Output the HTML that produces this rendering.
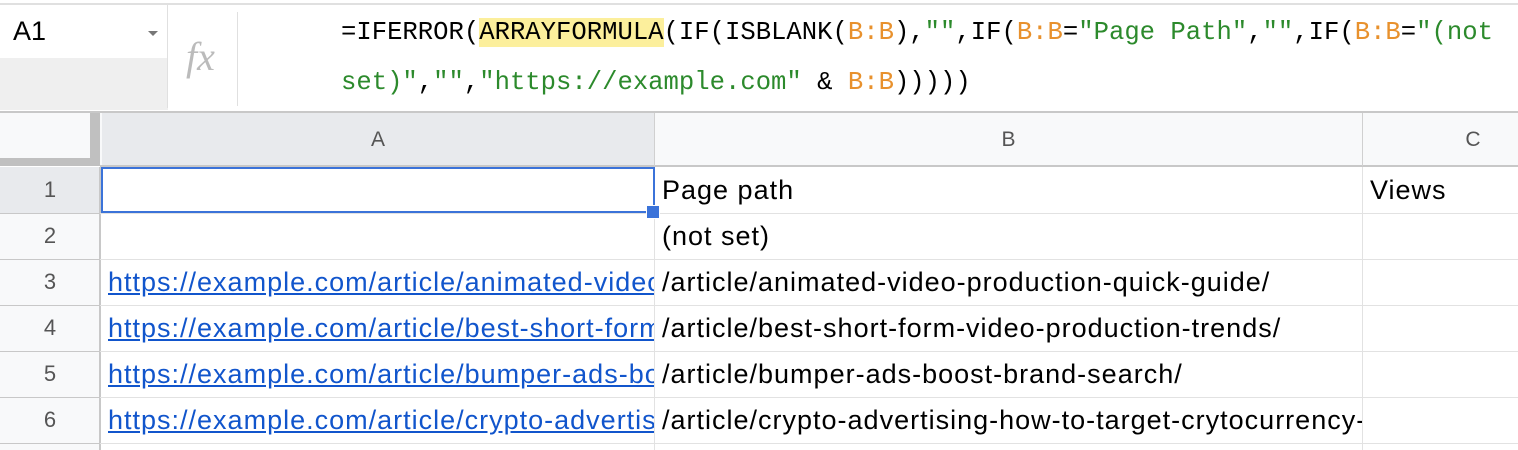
<!DOCTYPE html>
<html><head><style>
*{margin:0;padding:0;box-sizing:border-box}
body{width:1518px;height:450px;overflow:hidden;background:#fff;font-family:"Liberation Sans",Arial,sans-serif;position:relative}
.abs{position:absolute}
.mono{font-family:"Liberation Mono",monospace;font-size:25.6px;color:#000;white-space:pre}
.o{color:#e8912d}.g{color:#2c8a2c}
.cell{position:absolute;font-size:27px;letter-spacing:1px;color:#000;white-space:nowrap;overflow:hidden;padding-left:7px;line-height:46px}
.rn{position:absolute;left:0;width:100px;text-align:center;font-size:22px;color:#555;line-height:46px}
.hl{position:absolute;height:1px;background:#e2e2e2}
.vl{position:absolute;width:1px;background:#e2e2e2}
a{color:#1155cc;text-decoration:underline}
</style></head><body>
<div class="abs" style="left:0;top:0;width:1518px;height:5px;background:#fff;border-bottom:2px solid #e0e0e0"></div>
<div class="abs" style="left:0;top:58px;width:168px;height:52px;background:#efefef"></div>
<div class="abs" style="left:13px;top:16px;font-size:27px;color:#000">A1</div>
<div class="abs" style="left:148px;top:31px;width:0;height:0;border-left:5px solid transparent;border-right:5px solid transparent;border-top:5px solid #777"></div>
<div class="abs" style="left:167px;top:5px;width:1px;height:103px;background:#e0e0e0"></div>
<div class="abs" style="left:186px;top:33px;font-family:'Liberation Serif',serif;font-style:italic;font-size:40px;color:#bbb">fx</div>
<div class="abs" style="left:237px;top:12px;width:1px;height:94px;background:#e0e0e0"></div>
<div class="abs mono" style="left:341px;top:16px;line-height:34px">=IFERROR(<span style="background:#fcef9c">ARRAYFORMULA</span>(IF(ISBLANK(<span class="o">B:B</span>),<span class="g">""</span>,IF(<span class="o">B:B</span>=<span class="g">"Page Path"</span>,<span class="g">""</span>,IF(<span class="o">B:B</span>=<span class="g">"(not</span></div>
<div class="abs mono" style="left:341px;top:66px;line-height:34px"><span class="g">set)"</span>,<span class="g">""</span>,<span class="g">"https://example.com"</span> &amp; <span class="o">B:B</span>)))))</div>
<div class="abs" style="left:0;top:111px;width:1518px;height:2px;background:#c8c8c8"></div>
<div class="abs" style="left:0;top:113px;width:1518px;height:53px;background:#f8f9fa"></div>
<div class="abs" style="left:102px;top:113px;width:552px;height:53px;background:#e8eaed"></div>
<div class="abs" style="left:90px;top:113px;width:10px;height:53px;background:#c0c0c0"></div>
<div class="abs" style="left:0;top:158px;width:100px;height:8px;background:#c0c0c0"></div>
<div class="abs" style="left:100px;top:165px;width:1418px;height:2px;background:#c8c8c8"></div>
<div class="abs" style="left:654px;top:113px;width:1px;height:53px;background:#d0d0d0"></div>
<div class="abs" style="left:1362px;top:113px;width:1px;height:53px;background:#d0d0d0"></div>
<div class="abs" style="left:102px;top:113px;width:552px;text-align:center;line-height:53px;font-size:21px;color:#555">A</div>
<div class="abs" style="left:655px;top:113px;width:707px;text-align:center;line-height:53px;font-size:21px;color:#555">B</div>
<div class="abs" style="left:1363px;top:113px;width:220px;text-align:center;line-height:53px;font-size:21px;color:#555">C</div>
<div class="abs" style="left:0;top:167px;width:100px;height:283px;background:#f8f9fa"></div>
<div class="abs" style="left:0;top:167px;width:100px;height:46px;background:#e8eaed"></div>
<div class="abs" style="left:99px;top:167px;width:2px;height:283px;background:#c8c8c8"></div>
<div class="rn" style="top:167px">1</div><div class="rn" style="top:213px">2</div><div class="rn" style="top:259px">3</div><div class="rn" style="top:305px">4</div><div class="rn" style="top:351px">5</div><div class="rn" style="top:397px">6</div>
<div class="hl" style="left:0;top:213px;width:1518px"></div>
<div class="hl" style="left:0;top:259px;width:1518px"></div>
<div class="hl" style="left:0;top:305px;width:1518px"></div>
<div class="hl" style="left:0;top:351px;width:1518px"></div>
<div class="hl" style="left:0;top:397px;width:1518px"></div>
<div class="hl" style="left:0;top:443px;width:1518px"></div>
<div class="hl" style="left:0;top:213px;width:100px;background:#c8c8c8"></div>
<div class="hl" style="left:0;top:259px;width:100px;background:#c8c8c8"></div>
<div class="hl" style="left:0;top:305px;width:100px;background:#c8c8c8"></div>
<div class="hl" style="left:0;top:351px;width:100px;background:#c8c8c8"></div>
<div class="hl" style="left:0;top:397px;width:100px;background:#c8c8c8"></div>
<div class="hl" style="left:0;top:443px;width:100px;background:#c8c8c8"></div>
<div class="vl" style="left:654px;top:167px;height:283px"></div>
<div class="vl" style="left:1362px;top:167px;height:283px"></div>
<div class="cell" style="left:655px;top:167px;width:707px">Page path</div>
<div class="cell" style="left:1363px;top:167px;width:155px">Views</div>
<div class="cell" style="left:655px;top:213px;width:707px">(not set)</div>
<div class="cell" style="left:101px;top:259px;width:553px"><a>https://example.com/article/animated-video-production-quick-guide/</a></div>
<div class="cell" style="left:101px;top:305px;width:553px"><a>https://example.com/article/best-short-form-video-production-trends/</a></div>
<div class="cell" style="left:101px;top:351px;width:553px"><a>https://example.com/article/bumper-ads-boost-brand-search/</a></div>
<div class="cell" style="left:101px;top:397px;width:553px"><a>https://example.com/article/crypto-advertising-how-to-target-crytocurrency-</a></div>
<div class="cell" style="left:655px;top:259px;width:707px">/article/animated-video-production-quick-guide/</div>
<div class="cell" style="left:655px;top:305px;width:707px">/article/best-short-form-video-production-trends/</div>
<div class="cell" style="left:655px;top:351px;width:707px">/article/bumper-ads-boost-brand-search/</div>
<div class="cell" style="left:655px;top:397px;width:707px">/article/crypto-advertising-how-to-target-crytocurrency-investors/</div>
<div class="abs" style="left:101px;top:167px;width:554px;height:46px;border:2px solid #3b73d9"></div>
<div class="abs" style="left:646px;top:205px;width:14px;height:14px;background:#3b73d9;border:1px solid #fff"></div>
</body></html>
